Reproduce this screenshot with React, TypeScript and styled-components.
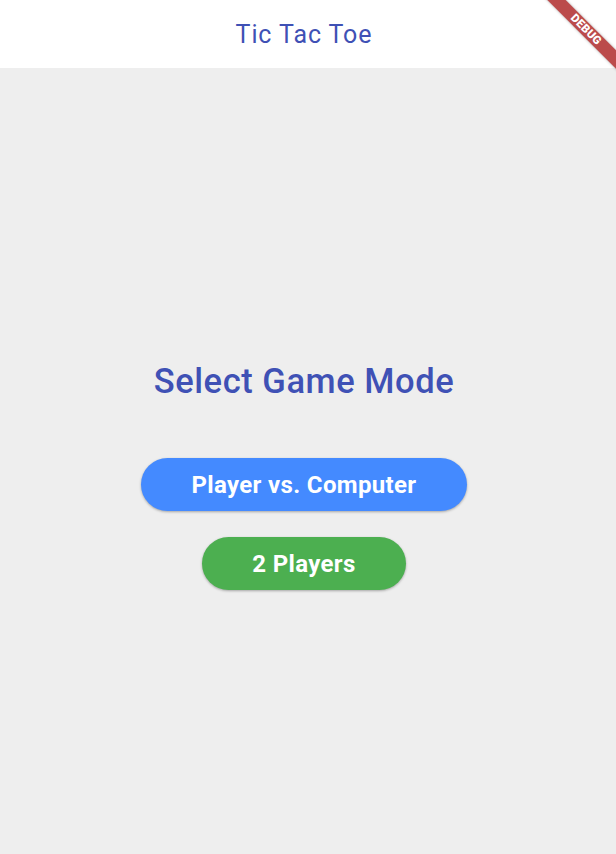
import React from "react";
import styled, { createGlobalStyle } from "styled-components";

const Global = createGlobalStyle`
  html, body { margin: 0; padding: 0; }
  body { font-family: Roboto, "Noto Sans", sans-serif; background: #eeeeee; }
`;

const Page = styled.div`
  position: relative;
  width: 616px;
  height: 854px;
  overflow: hidden;
  display: flex;
  flex-direction: column;
  background: #eeeeee;
`;

const AppBar = styled.header`
  height: 68px;
  flex: none;
  background: #ffffff;
  display: flex;
  align-items: center;
  justify-content: center;
  padding-right: 8px;
`;

const Title = styled.h1`
  margin: 0;
  font-family: Roboto, sans-serif;
  font-weight: 400;
  font-size: 25px;
  letter-spacing: 0.9px;
  color: #3f51b5;
`;

const Body = styled.main`
  flex: 1;
  display: flex;
  flex-direction: column;
  align-items: center;
  justify-content: center;
  padding: 29px 8px 0 0;
`;

const Heading = styled.h2`
  margin: 0 0 56px;
  font-family: Roboto, sans-serif;
  font-weight: 500;
  font-size: 34.5px;
  letter-spacing: 0.55px;
  line-height: 41px;
  color: #3f51b5;
`;

const ModeButton = styled.button<{ $bg: string }>`
  border: none;
  border-radius: 27px;
  height: 53px;
  padding: 0 50px;
  background: ${(p) => p.$bg};
  color: #ffffff;
  font-family: Roboto, sans-serif;
  font-weight: 700;
  font-size: 24px;
  letter-spacing: 0.35px;
  box-shadow: 0 1px 3px rgba(0, 0, 0, 0.2), 0 1px 2px rgba(0, 0, 0, 0.12);
  cursor: pointer;
  & + & { margin-top: 26px; }
`;

const Banner = styled.div`
  position: absolute;
  top: 22.5px;
  right: -25px;
  width: 110px;
  height: 13px;
  transform: rotate(45deg);
  background: rgba(170, 30, 30, 0.8);
  box-shadow: 0 0 3px rgba(0, 0, 0, 0.3);
  color: #fff;
  font-family: Roboto, sans-serif;
  font-weight: 900;
  font-size: 11.5px;
  line-height: 13px;
  text-align: center;
  letter-spacing: 0.3px;
`;

export default function App() {
  return (
    <Page>
      <Global />
      <AppBar>
        <Title>Tic Tac Toe</Title>
      </AppBar>
      <Body>
        <Heading>Select Game Mode</Heading>
        <ModeButton $bg="#448aff">Player vs. Computer</ModeButton>
        <ModeButton $bg="#4caf50">2 Players</ModeButton>
      </Body>
      <Banner>DEBUG</Banner>
    </Page>
  );
}
